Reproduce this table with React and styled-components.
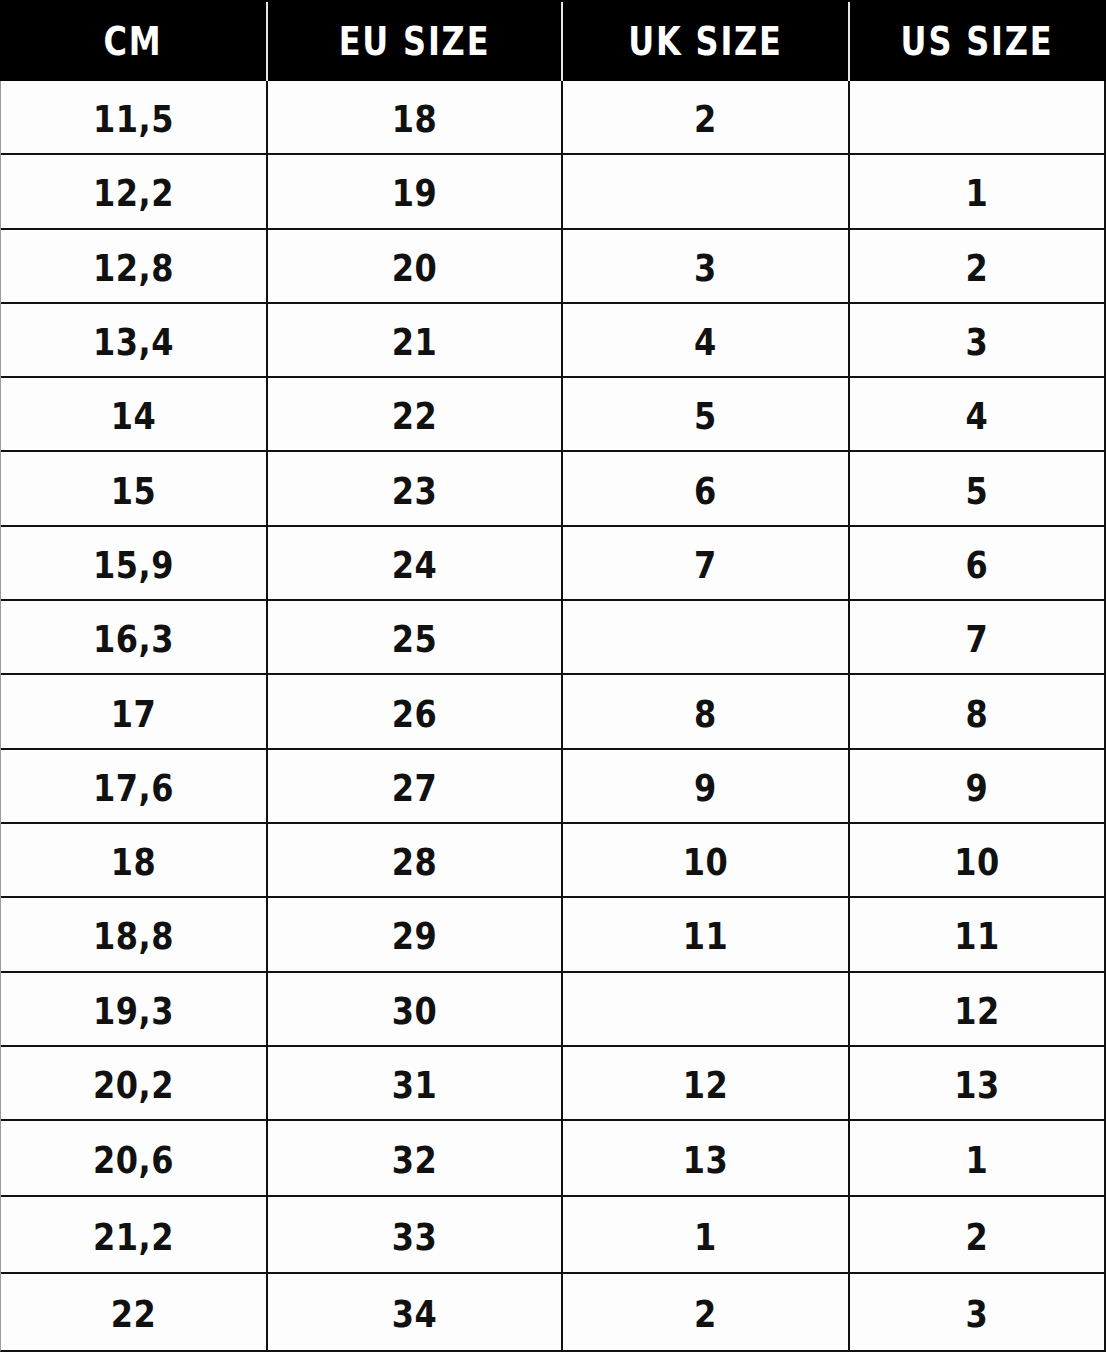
import React from 'react';
import styled, { createGlobalStyle } from 'styled-components';

const GlobalStyle = createGlobalStyle`
  html, body {
    margin: 0;
    padding: 0;
    background: #ffffff;
  }
  body {
    font-family: "DejaVu Sans", "Liberation Sans", sans-serif;
  }
`;

const COLUMNS = '266px 295px 287px 256px';

const rows = [
  ['11,5', '18', '2', ''],
  ['12,2', '19', '', '1'],
  ['12,8', '20', '3', '2'],
  ['13,4', '21', '4', '3'],
  ['14', '22', '5', '4'],
  ['15', '23', '6', '5'],
  ['15,9', '24', '7', '6'],
  ['16,3', '25', '', '7'],
  ['17', '26', '8', '8'],
  ['17,6', '27', '9', '9'],
  ['18', '28', '10', '10'],
  ['18,8', '29', '11', '11'],
  ['19,3', '30', '', '12'],
  ['20,2', '31', '12', '13'],
  ['20,6', '32', '13', '1'],
  ['21,2', '33', '1', '2'],
  ['22', '34', '2', '3'],
];

export default function App() {
  return (
    <>
      <GlobalStyle />
      <Table>
        <HeadRow>
          {['CM', 'EU SIZE', 'UK SIZE', 'US SIZE'].map((label, i) => (
            <HeadCell key={label} $first={i === 0}>
              <Tall $scale={1.2}>{label}</Tall>
            </HeadCell>
          ))}
        </HeadRow>
        {rows.map((row, r) => (
          <BodyRow key={r} $h={r >= 14 ? 76.3 : 74.3}>
            {row.map((value, i) => (
              <Cell key={i} $first={i === 0}>
                {value && <Tall $scale={1.16}>{value}</Tall>}
              </Cell>
            ))}
          </BodyRow>
        ))}
      </Table>
    </>
  );
}

const Table = styled.div`
  width: 1106px;
  box-sizing: border-box;
  border-right: 2px solid #111;
  border-left: 1px solid #9a9a9a;
  border-bottom: 2px solid #111;
  background: #fdfdfd;
`;

const HeadRow = styled.div`
  display: grid;
  grid-template-columns: ${COLUMNS};
  height: 81px;
  box-sizing: border-box;
  padding-top: 2px;
  background: #000;
  margin-right: -2px;
  margin-left: -1px;
`;

const HeadCell = styled.div`
  display: flex;
  align-items: center;
  justify-content: center;
  box-sizing: border-box;
  border-left: ${(p) => (p.$first ? 'none' : '2px solid #e6e6e6')};
  color: #fff;
  font-size: 32px;
  font-weight: 700;
  letter-spacing: 1.8px;
`;

const BodyRow = styled.div`
  display: grid;
  grid-template-columns: 265px 295px 287px 256px;
  height: ${(p) => p.$h}px;
  box-sizing: border-box;
  border-bottom: 2px solid #111;
  &:last-child {
    border-bottom: none;
  }
`;

const Cell = styled.div`
  display: flex;
  align-items: center;
  justify-content: center;
  box-sizing: border-box;
  padding-top: 4px;
  border-left: ${(p) => (p.$first ? 'none' : '2px solid #111')};
  color: #111;
  font-size: 32px;
  font-weight: 700;
  letter-spacing: 0.5px;
`;

const Tall = styled.span`
  display: inline-block;
  line-height: 1;
  transform: scaleY(${(p) => p.$scale});
`;
